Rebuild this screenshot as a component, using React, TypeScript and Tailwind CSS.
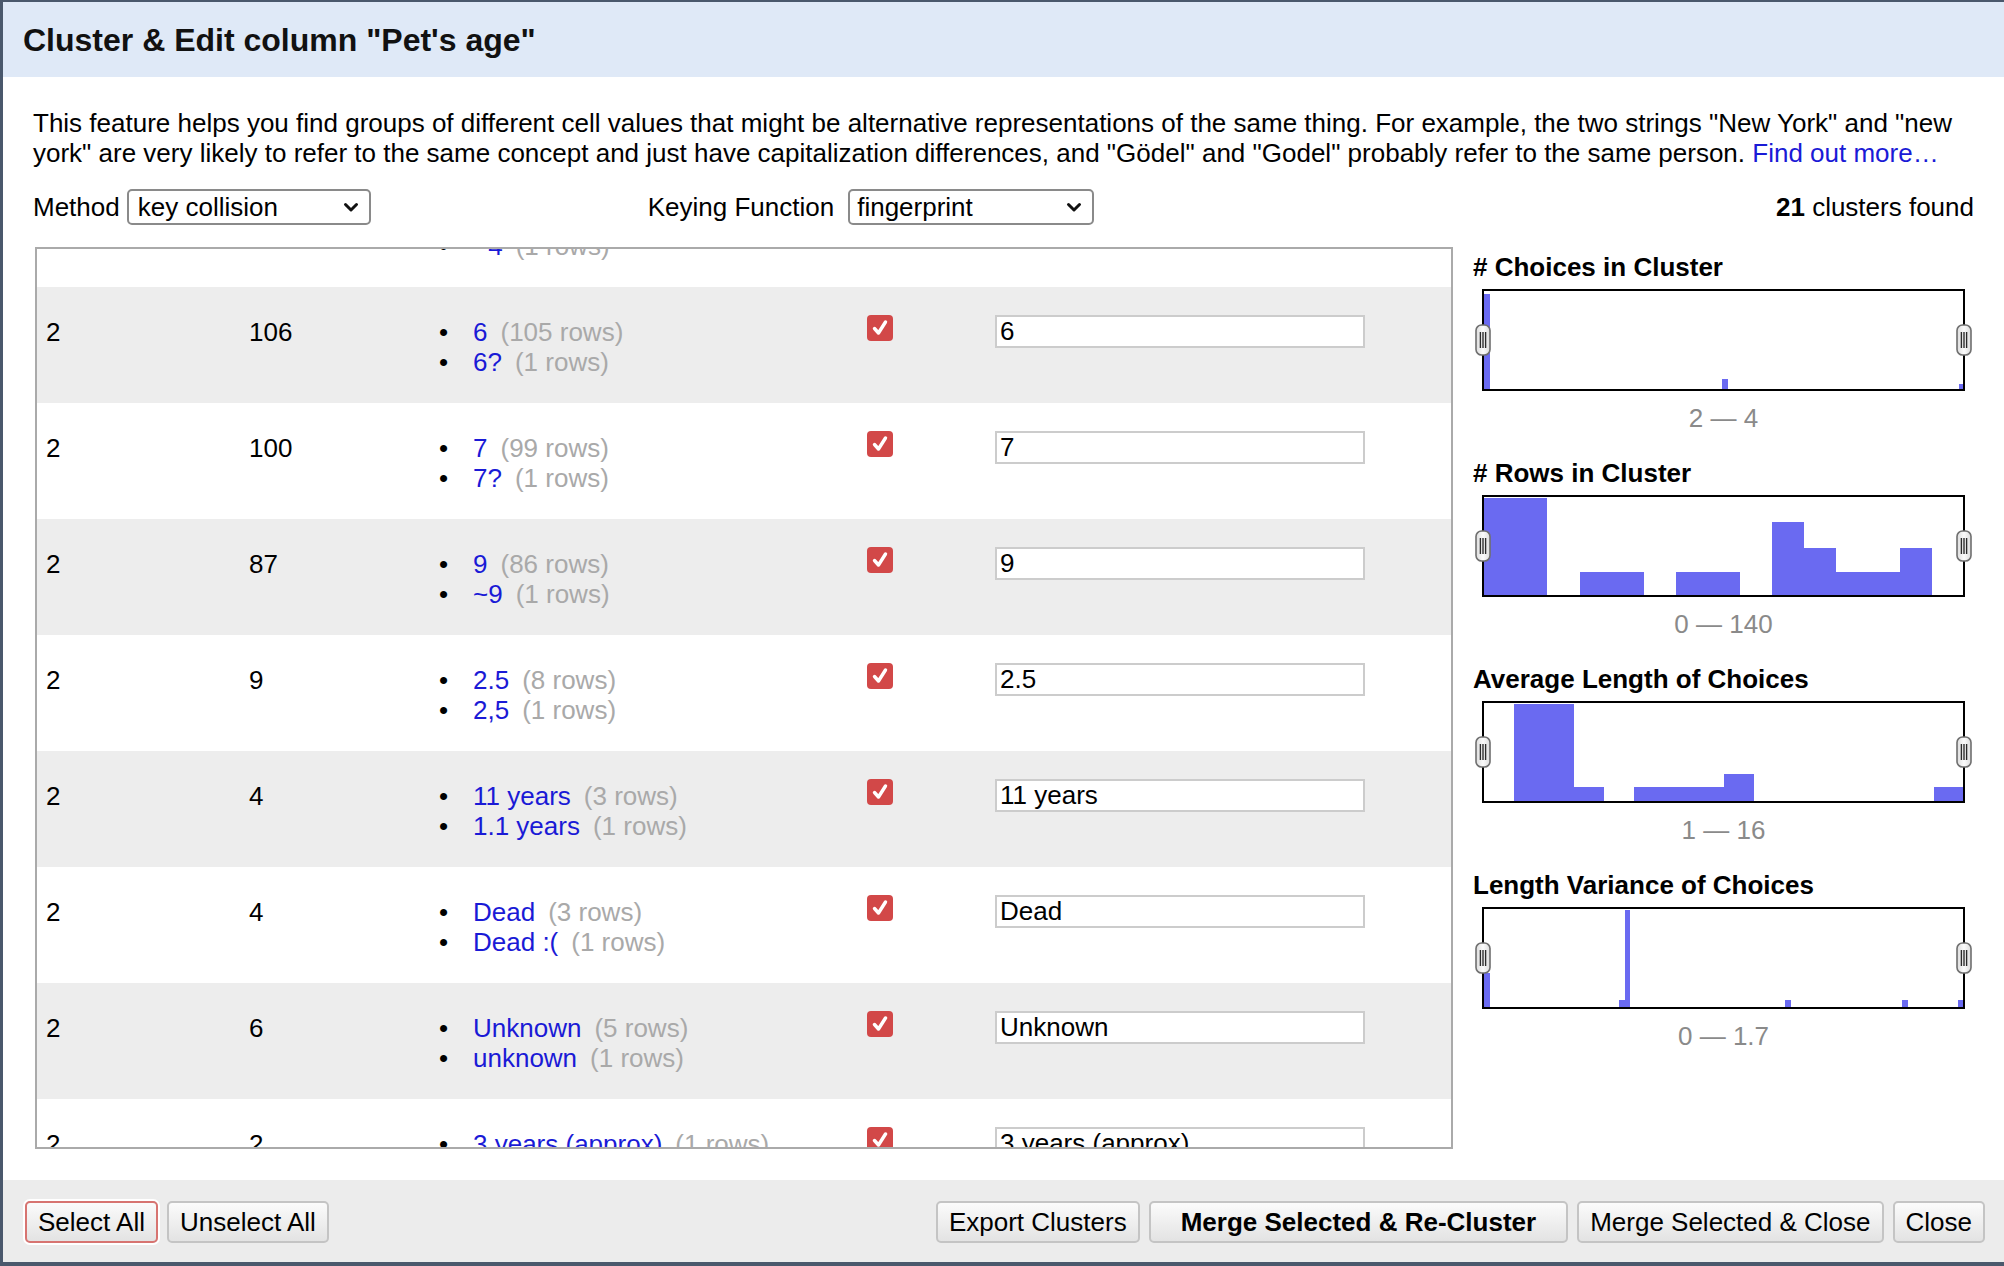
import React from "react";

type Bar = [number, number, number, number];

const hists: { title: string; label: string; bars: Bar[] }[] = [
  {
    title: "# Choices in Cluster",
    label: "2 \u2014 4",
    bars: [
      [0, 3, 6, 95],
      [238, 88, 6, 10],
      [475, 93, 4, 5],
    ],
  },
  {
    title: "# Rows in Cluster",
    label: "0 \u2014 140",
    bars: [
      [0, 1, 63, 97],
      [96, 75, 64, 23],
      [192, 75, 64, 23],
      [288, 25, 32, 73],
      [320, 51, 32, 47],
      [352, 75, 64, 23],
      [416, 51, 32, 47],
    ],
  },
  {
    title: "Average Length of Choices",
    label: "1 \u2014 16",
    bars: [
      [30, 1, 60, 97],
      [90, 84, 30, 14],
      [150, 84, 90, 14],
      [240, 71, 30, 27],
      [450, 84, 29, 14],
    ],
  },
  {
    title: "Length Variance of Choices",
    label: "0 \u2014 1.7",
    bars: [
      [0, 64, 6, 34],
      [135, 91, 6, 7],
      [141, 1, 5, 97],
      [301, 91, 6, 7],
      [418, 91, 6, 7],
      [474, 91, 5, 7],
    ],
  },
];

type Row = {
  a: string;
  b: string;
  items: ([string, string] | null)[];
  value: string;
  first?: boolean;
};

const rows: Row[] = [
  { a: "", b: "", items: [null, ["~4", "(1 rows)"]], value: "", first: true },
  { a: "2", b: "106", items: [["6", "(105 rows)"], ["6?", "(1 rows)"]], value: "6" },
  { a: "2", b: "100", items: [["7", "(99 rows)"], ["7?", "(1 rows)"]], value: "7" },
  { a: "2", b: "87", items: [["9", "(86 rows)"], ["~9", "(1 rows)"]], value: "9" },
  { a: "2", b: "9", items: [["2.5", "(8 rows)"], ["2,5", "(1 rows)"]], value: "2.5" },
  { a: "2", b: "4", items: [["11 years", "(3 rows)"], ["1.1 years", "(1 rows)"]], value: "11 years" },
  { a: "2", b: "4", items: [["Dead", "(3 rows)"], ["Dead :(", "(1 rows)"]], value: "Dead" },
  { a: "2", b: "6", items: [["Unknown", "(5 rows)"], ["unknown", "(1 rows)"]], value: "Unknown" },
  { a: "2", b: "2", items: [["3 years (approx)", "(1 rows)"], null], value: "3 years (approx)" },
];

function Handle() {
  return (
    <svg width="16" height="32" viewBox="0 0 16 32">
      <defs>
        <linearGradient id="hg" x1="0" y1="0" x2="1" y2="0">
          <stop offset="0" stopColor="#dcdcdc" />
          <stop offset="0.5" stopColor="#fbfbfb" />
          <stop offset="1" stopColor="#dcdcdc" />
        </linearGradient>
      </defs>
      <rect x="1" y="1" width="14" height="30" rx="5.5" fill="url(#hg)" stroke="#6f6f6f" strokeWidth="1.6" />
      <line x1="5.4" y1="8" x2="5.4" y2="24" stroke="#2b2b2b" strokeWidth="1.4" />
      <line x1="8" y1="8" x2="8" y2="24" stroke="#2b2b2b" strokeWidth="1.4" />
      <line x1="10.6" y1="8" x2="10.6" y2="24" stroke="#2b2b2b" strokeWidth="1.4" />
    </svg>
  );
}

function Histogram({ title, label, bars }: { title: string; label: string; bars: Bar[] }) {
  return (
    <div className="flex flex-col">
      <div className="text-[26px] leading-[30px] font-bold text-black">{title}</div>
      <div className="relative ml-[9px] mt-[7px] h-[102px] w-[483px] border-2 border-black bg-white">
        <svg width="479" height="98" viewBox="0 0 479 98" className="block">
          {bars.map((b, i) => (
            <rect key={i} x={b[0]} y={b[1]} width={b[2]} height={b[3]} fill="#6a6af1" />
          ))}
        </svg>
        <div className="absolute left-[-9px] top-[33px]">
          <Handle />
        </div>
        <div className="absolute right-[-9px] top-[33px]">
          <Handle />
        </div>
      </div>
      <div className="ml-[9px] mt-[12px] w-[483px] text-center text-[26px] leading-[30px] text-[#8a8a8a]">
        {label}
      </div>
    </div>
  );
}

function Chevron() {
  return (
    <svg width="16" height="12" viewBox="0 0 16 12">
      <path d="M2.5 3.5 L8 9 L13.5 3.5" fill="none" stroke="#111" strokeWidth="3" strokeLinecap="round" strokeLinejoin="round" />
    </svg>
  );
}

function Checkbox() {
  return (
    <div className="flex h-[26px] w-[26px] items-center justify-center rounded-[4px] bg-[#d24848]">
      <svg width="20" height="20" viewBox="0 0 20 20">
        <path d="M4.5 10.5 L8.5 15 L15.5 4" fill="none" stroke="#fff" strokeWidth="3.4" strokeLinecap="round" strokeLinejoin="round" />
      </svg>
    </div>
  );
}

function Btn({ children, primary, focus }: { children: React.ReactNode; primary?: boolean; focus?: boolean }) {
  return (
    <button
      className={
        "h-[42px] rounded-[5px] border-2 bg-linear-to-b from-[#fbfbfb] to-[#e3e3e3] text-[26px] leading-none text-black " +
        (primary ? "px-[30px] font-bold " : "px-[11px] ") +
        (focus ? "border-[#d77471] shadow-[0_0_0_2px_#ffffff]" : "border-[#c4c4c4]")
      }
    >
      {children}
    </button>
  );
}

export default function App() {
  return (
    <div className="flex h-[1266px] w-[2004px] flex-col overflow-hidden border-t-2 border-b-4 border-l-[3px] border-[#4a586c] bg-white font-['Liberation_Sans',Arial,Helvetica,sans-serif] text-black">
      <div className="flex h-[75px] shrink-0 items-center bg-[#dfe9f7] pl-[20px]">
        <h1 className="text-[32px] font-bold leading-none text-[#111]">Cluster &amp; Edit column "Pet's age"</h1>
      </div>

      <div className="flex flex-1 flex-col px-[30px] pt-[31px]">
        <p className="whitespace-nowrap text-[26px] leading-[30px]">
          This feature helps you find groups of different cell values that might be alternative representations of the same thing. For example, the two strings "New York" and "new
          <br />
          york" are very likely to refer to the same concept and just have capitalization differences, and "Gödel" and "Godel" probably refer to the same person.{" "}
          <a className="text-[#1a1ad6]">Find out more…</a>
        </p>

        <div className="mt-[21px] flex h-[36px] items-center text-[26px]">
          <span>Method</span>
          <div className="ml-[7px] flex h-[36px] w-[244px] items-center justify-between rounded-[5px] border-2 border-[#8a8a8a] bg-white pl-[9px] pr-[10px]">
            <span>key collision</span>
            <Chevron />
          </div>
          <span className="ml-[277px]">Keying Function</span>
          <div className="ml-[14px] flex h-[36px] w-[246px] items-center justify-between rounded-[5px] border-2 border-[#8a8a8a] bg-white pl-[7px] pr-[10px]">
            <span>fingerprint</span>
            <Chevron />
          </div>
          <span className="ml-auto">
            <b>21</b> clusters found
          </span>
        </div>

        <div className="mt-[22px] flex">
          <div className="ml-[2px] h-[902px] w-[1418px] shrink-0 overflow-hidden border-2 border-[#aaaaaa]">
            <div className="mt-[-78px]">
              {rows.map((r, i) => (
                <div
                  key={i}
                  className={
                    "grid h-[116px] grid-cols-[203px_190px_428px_128px_465px] pt-[30px] text-[26px] leading-[30px] " +
                    (i % 2 === 1 ? "bg-[#ededed]" : "bg-white")
                  }
                >
                  <div className="pl-[9px]">{r.a}</div>
                  <div className="pl-[9px]">{r.b}</div>
                  <div className="pl-[9px]">
                    {r.items.map((it, j) =>
                      it ? (
                        <div key={j} className="flex whitespace-nowrap">
                          <span className="w-[34px]">•</span>
                          <span className="text-[#1a1ad6]">{it[0]}</span>
                          <span className="ml-[13px] text-[#a9a9a9]">{it[1]}</span>
                        </div>
                      ) : (
                        <div key={j} className="h-[30px]" />
                      )
                    )}
                  </div>
                  <div className="mt-[-2px] pl-[9px]">{!r.first && <Checkbox />}</div>
                  <div className="mt-[-2px] pl-[9px]">
                    {!r.first && (
                      <input
                        readOnly
                        value={r.value}
                        className="h-[33px] w-[370px] border-2 border-[#cccccc] bg-white px-[3px] text-[26px] leading-none text-black outline-none"
                      />
                    )}
                  </div>
                </div>
              ))}
            </div>
          </div>

          <div className="ml-[20px] flex flex-col gap-[25px] pt-[5px]">
            {hists.map((h, i) => (
              <Histogram key={i} title={h.title} label={h.label} bars={h.bars} />
            ))}
          </div>
        </div>
      </div>

      <div className="flex h-[82px] shrink-0 items-start gap-[9px] bg-[#ececec] pl-[22px] pr-[19px] pt-[21px]">
        <Btn focus>Select All</Btn>
        <Btn>Unselect All</Btn>
        <div className="flex-1" />
        <Btn>Export Clusters</Btn>
        <Btn primary>Merge Selected &amp; Re-Cluster</Btn>
        <Btn>Merge Selected &amp; Close</Btn>
        <Btn>Close</Btn>
      </div>
    </div>
  );
}
